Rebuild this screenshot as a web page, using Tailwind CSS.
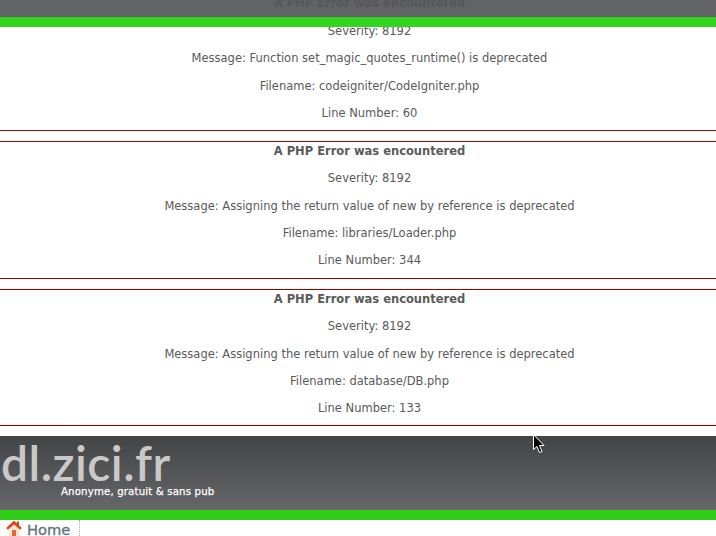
<!DOCTYPE html>
<html lang="en">
<head>
<meta charset="UTF-8">
<title>dl.zici.fr</title>
<script src="https://cdn.jsdelivr.net/npm/@tailwindcss/browser@4"></script>
</head>
<body class="relative bg-white w-[716px] h-[536px] overflow-hidden font-['DejaVu_Sans',sans-serif] text-[11.5px] leading-[15.33px] text-[#5a5a5a]">

  <!-- first error sits under the sticky bar, only its title shows through -->
  <div class="relative z-10 h-[27px] bg-[#626365] border-b-[10px] border-[#32d41e] text-center font-bold text-[#56575a] pl-[23px] overflow-hidden">
    <div class="-mt-[4px]">A PHP Error was encountered</div>
  </div>
  <div class="text-center border-b border-[#990000] h-[107px] -mt-[3px] mb-[10px] pl-[23px]">
    <p class="mb-3">Severity: 8192</p>
    <p class="mb-3">Message: Function set_magic_quotes_runtime() is deprecated</p>
    <p class="mb-3">Filename: codeigniter/CodeIgniter.php</p>
    <p class="mb-3">Line Number: 60</p>
  </div>

  <div class="text-center border border-[#990000] border-x-0 h-[138px] mb-[10px] pt-[2px] pl-[23px]">
    <h4 class="font-bold mb-3">A PHP Error was encountered</h4>
    <p class="mb-3">Severity: 8192</p>
    <p class="mb-3">Message: Assigning the return value of new by reference is deprecated</p>
    <p class="mb-3">Filename: libraries/Loader.php</p>
    <p class="mb-3">Line Number: 344</p>
  </div>

  <div class="text-center border border-[#990000] border-x-0 h-[137px] mb-[10px] pt-[2px] pl-[23px]">
    <h4 class="font-bold mb-3">A PHP Error was encountered</h4>
    <p class="mb-3">Severity: 8192</p>
    <p class="mb-3">Message: Assigning the return value of new by reference is deprecated</p>
    <p class="mb-3">Filename: database/DB.php</p>
    <p class="mb-3">Line Number: 133</p>
  </div>

  <div class="h-[84px] bg-gradient-to-b from-[#434445] to-[#666769] border-b-[10px] border-[#2fcc1a]">
    <div class="font-['Lato',sans-serif] font-semibold text-[48px] leading-[46px] tracking-[0.5px] text-[#c9c9c9] pl-[1px] pt-[4px]">dl.zici.fr</div>
    <div class="text-[10.2px] leading-[12px] tracking-[0.15px] text-white [-webkit-text-stroke:0.25px_#ffffff] pl-[61px]">Anonyme, gratuit &amp; sans pub</div>
  </div>

  <div class="flex items-center h-[16px] pl-[6px]">
    <svg class="w-[16px] h-[16px] shrink-0" viewBox="0 0 16 16">
      <rect x="11" y="1.5" width="2" height="4" fill="#c9471e"/>
      <path d="M2.5 8.5 L8 3.5 L13.5 8.5 V16 H2.5 Z" fill="#f4e6d6"/>
      <path d="M8 0.5 L15.8 8 L14.2 9.8 L8 4.4 L1.8 9.8 L0.2 8 Z" fill="#d9481c"/>
      <rect x="6" y="10" width="4" height="6" fill="#de6a30"/>
    </svg>
    <span class="ml-[5px] mt-[4px] text-[14.7px] text-[#64727f] [-webkit-text-stroke:0.3px_#64727f]">Home</span>
    <span class="ml-[9px] h-full border-l border-dotted border-[#aaaaaa]"></span>
  </div>

  <!-- mouse pointer captured in the screenshot -->
  <svg class="absolute left-[533px] top-[434px] w-[13px] h-[20px]" viewBox="0 0 13 20">
    <path d="M0.5 0.5 V15.5 L4 12.5 L6.5 18.5 L9 17.5 L6.5 11.5 L11 11.5 Z" fill="#000" stroke="#fff" stroke-width="1"/>
  </svg>
</body>
</html>
